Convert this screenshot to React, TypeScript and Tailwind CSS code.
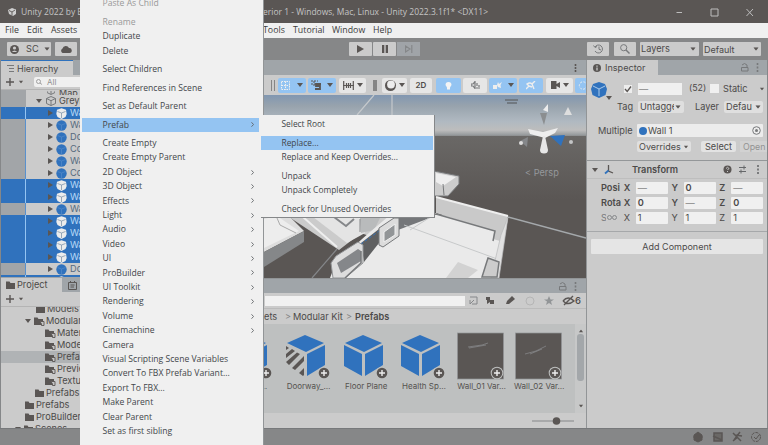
import React from "react";

const DARK = "#5a5654";
const BLUE = "#3072bd";

function Caret({ className = "" }: { className?: string }) {
  return (
    <svg className={`h-[4px] w-[6px] shrink-0 ${className}`} viewBox="0 0 6 4">
      <path d="M0 0H6L3 4Z" fill={DARK} />
    </svg>
  );
}

function Folder({ linked = false }: { linked?: boolean }) {
  return (
    <svg className="h-[9px] w-[12px] shrink-0" viewBox="0 0 12 9">
      <path d="M0 0.500H3.500L4.500 2H9V8H0Z" fill={DARK} />
      {linked && <path d="M6.500 4.500H10V8.500H7.500V6.500" fill="#c4c4c4" stroke={DARK} strokeWidth="0.900" />}
    </svg>
  );
}

function SmallCube({ light = false }: { light?: boolean }) {
  return (
    <svg className="h-[11px] w-[11px] shrink-0" viewBox="0 0 11 11">
      {light ? (
        <path d="M5.500 0.200L10 1.800L10.700 6L9.500 9L5.500 10.900L1.500 9L0.300 6L1 1.800Z" fill="#ececec" />
      ) : (
        <circle cx="5.500" cy="5.500" r="5.200" fill={BLUE} />
      )}
      <path d="M1.500 3.500L5.500 5L9.500 3.500M5.500 5V10" stroke={light ? "#8296ab" : "#5088c8"} strokeWidth="0.800" fill="none" />
    </svg>
  );
}

/* ---------- Title bar, menu bar and main toolbar ---------- */

function TitleBar() {
  return (
    <div className="flex h-[23px] shrink-0 items-center bg-[#5a5654] pt-px text-[#c4c4c4]">
      <svg className="ml-[8px] h-[8px] w-[8px]" viewBox="0 0 8 8">
        <path d="M0 2L4 0L8 1.500V6L5 8L1 6Z" fill="#cfcfcf" />
        <path d="M4 4L1 2.500M4 4L7 2M4 4V7.500" stroke={DARK} strokeWidth="0.900" />
      </svg>
      <div className="ml-[5px] w-[242px] whitespace-nowrap font-['Open_Sans',sans-serif] text-[8.500px]">Unity 2022 by Example - Int</div>
      <div className="whitespace-nowrap font-['Open_Sans',sans-serif] text-[8.500px]">erior 1 - Windows, Mac, Linux - Unity 2022.3.1f1* &lt;DX11&gt;</div>
      <svg className="ml-auto mr-[14px] h-[9px] w-[78px]" viewBox="0 0 78 9" fill="none" stroke="#bdbdbd">
        <path d="M0.500 4.500H6M35 1H42V8H35ZM70.500 1L77 8M77 1L70.500 8" />
      </svg>
    </div>
  );
}

function MenuBar() {
  return (
    <div className="flex h-[15px] shrink-0 items-center whitespace-nowrap bg-[#f0f0f0] pl-[5px] font-['Open_Sans',sans-serif] text-[8.800px] text-[#3c3c3c]">
      <span className="w-[22px]">File</span>
      <span className="w-[24px]">Edit</span>
      <span className="w-[212px]">Assets</span>
      <span className="w-[30px]">Tools</span>
      <span className="w-[39px]">Tutorial</span>
      <span className="w-[41px]">Window</span>
      <span>Help</span>
    </div>
  );
}

function Toolbar() {
  const btn = "flex h-[14px] items-center rounded-[1px] bg-[#cbcbcb]";
  return (
    <div className="flex h-[22px] shrink-0 items-center bg-[#868788] pl-[7px]">
      <div className={`${btn} w-[44px] pl-[3px]`}>
        <svg className="h-[9px] w-[9px]" viewBox="0 0 9 9">
          <circle cx="4.500" cy="4.500" r="4.500" fill={DARK} />
          <circle cx="4.500" cy="3" r="1.600" fill="#cbcbcb" />
          <path d="M1.800 7Q4.500 4 7.200 7Z" fill="#cbcbcb" />
        </svg>
        <span className="ml-[7px] text-[9.200px]">SC</span>
        <Caret className="ml-[5px] scale-90" />
      </div>
      <div className={`${btn} ml-[4px] w-[22px] justify-center`}>
        <svg className="h-[8px] w-[12px]" viewBox="0 0 12 8">
          <path d="M2.500 8A2.500 2.500 0 0 1 2.500 3.500A3.500 3.500 0 0 1 9 3A2.500 2.500 0 0 1 9.500 8Z" fill={DARK} />
        </svg>
      </div>
      <div className="ml-[272px] flex gap-px">
        <div className={`${btn} w-[23px] justify-center`}>
          <svg className="h-[8px] w-[7px]" viewBox="0 0 7 8"><path d="M0 0L7 4L0 8Z" fill={DARK} /></svg>
        </div>
        <div className={`${btn} w-[23px] justify-center`}>
          <svg className="h-[8px] w-[6px]" viewBox="0 0 6 8"><path d="M0 0H2.300V8H0ZM3.700 0H6V8H3.700Z" fill={DARK} /></svg>
        </div>
        <div className="flex h-[14px] w-[23px] items-center justify-center bg-[#a0a4a8]">
          <svg className="h-[8px] w-[8px]" viewBox="0 0 8 8" fill="none" stroke="#858789"><path d="M0.500 1L5 4L0.500 7ZM6.800 0V8" strokeWidth="1.200" /></svg>
        </div>
      </div>
      <div className={`${btn} ml-[167px] w-[22px] justify-center`}>
        <svg className="h-[10px] w-[11px]" viewBox="0 0 11 10" fill="none" stroke="#77797b">
          <path d="M2 3A4 4 0 1 1 2 7M0.500 1.500L2 3.500L4 2.500M6 2.500V5.300L8 6" />
        </svg>
      </div>
      <div className={`${btn} ml-[5px] w-[22px] justify-center`}>
        <svg className="h-[10px] w-[10px]" viewBox="0 0 10 10" fill="none" stroke="#77797b">
          <circle cx="3.700" cy="3.700" r="3.100" /><path d="M6 6L9.500 9.500" strokeWidth="1.400" />
        </svg>
      </div>
      <div className={`${btn} ml-[4px] w-[59px] justify-between pl-[1px] pr-[3px] text-[9.200px]`}>Layers<Caret className="scale-90" /></div>
      <div className={`${btn} ml-[4px] w-[58px] justify-between pl-[1px] pr-[2px] text-[9px]`}>Default<Caret className="scale-90" /></div>
    </div>
  );
}

/* ---------- Left column ---------- */

const hierarchyRows: [string, boolean][] = [
  ["Wall 1", true], ["Wall 1", false], ["Doorway", false], ["Corner", false],
  ["Wall 2", false], ["Corner", false], ["Wall 1", true], ["Wall 1", true],
  ["Wall 2", false], ["Wall 1", true], ["Wall 1", true], ["Wall 1", true],
  ["Wall 1", true], ["Doorway", false], ["Wall 1", true],
];

function Hierarchy() {
  return (
    <div className="flex h-[217px] shrink-0 flex-col overflow-hidden bg-[#cbcbcb]">
      <div className="flex h-[15px] shrink-0 bg-[#a0a5a9]">
        <div className="flex w-[72px] items-center border-t border-[#3072bd] bg-[#cbcbcb] pl-[6px] text-[9px]">
          <svg className="mr-[3px] h-[7px] w-[7px]" viewBox="0 0 7 7" stroke="#77797b"><path d="M0 0.500H7M2 3.500H7M2 6.500H7" /></svg>
          Hierarchy
        </div>
      </div>
      <div className="flex h-[15px] shrink-0 items-center border-b border-[#b4b4b4]">
        <svg className="ml-[5px] h-[8px] w-[8px]" viewBox="0 0 8 8" stroke={DARK} strokeWidth="1.400"><path d="M4 0V8M0 4H8" /></svg>
        <Caret className="ml-[4px] scale-75" />
        <div className="ml-[10px] flex h-[10px] w-[180px] items-center rounded-[2px] bg-[#f0f0f0] pl-[2px] text-[8px] text-[#909090]">
          <svg className="mr-[4px] h-[6px] w-[7px]" viewBox="0 0 7 6" fill="none" stroke="#a0a0a0"><circle cx="2.500" cy="2.500" r="2" /><path d="M4 4L6 5.500" /></svg>
          All
        </div>
      </div>
      <div className="flex h-[5px] shrink-0 items-end overflow-hidden">
        <span className="h-full w-[25px] bg-[#a2a5a8]" />
        <svg className="ml-[21px] h-[4px] w-[8px]" viewBox="0 0 8 4" stroke="#77797b" fill="none"><path d="M0 0V1.500L4 3.500L8 1.500V0M4 0V3" /></svg>
        <span className="ml-[4px] text-[9px] leading-[5px]">Map</span>
      </div>
      <div className="flex h-[12px] shrink-0 items-center text-[9.200px]">
        <span className="h-full w-[25px] bg-[#a2a5a8]" />
        <Caret className="ml-[10px]" />
        <svg className="ml-[4px] h-[10px] w-[10px]" viewBox="0 0 10 10" fill="none" stroke="#77797b">
          <path d="M5 0.500L9.500 2.500V7.500L5 9.500L0.500 7.500V2.500ZM0.500 2.500L5 4.700L9.500 2.500M5 4.700V9.500" />
        </svg>
        <span className="ml-[3px] whitespace-nowrap">Greybox</span>
      </div>
      {hierarchyRows.map(([name, selected], i) => (
        <div key={i} className={`flex h-[12px] shrink-0 items-center whitespace-nowrap text-[9.200px] ${selected ? "bg-[#3072bd] text-[#b9dbf8]" : "bg-[#cbcbcb] text-[#56697e]"}`}>
          <span className={`h-full w-[25px] border-r ${selected ? "border-[#94c4f2]" : "border-[#5a91cd] bg-[#a2a5a8]"}`} />
          <svg className="ml-[22px] h-[6px] w-[5px]" viewBox="0 0 5 6"><path d="M0 0L5 3L0 6Z" fill={DARK} /></svg>
          <span className="ml-[3px] flex"><SmallCube light={selected} /></span>
          <span className="ml-[3px]">{name}</span>
        </div>
      ))}
    </div>
  );
}

function TreeRow({ name, indent, linked, open, selected }: { name: string; indent: string; linked?: boolean; open?: boolean; selected?: boolean }) {
  return (
    <div className={`flex h-[12px] shrink-0 items-center whitespace-nowrap text-[9.200px] ${indent} ${selected ? "bg-[#b0b3b5]" : ""}`}>
      {open && <Caret className="mr-[3px]" />}
      <Folder linked={linked} />
      <span className={linked ? "" : "-ml-px"}>{name}</span>
    </div>
  );
}

function ProjectTree() {
  return (
    <div className="flex grow flex-col overflow-hidden bg-[#cbcbcb]">
      <div className="flex h-[15px] shrink-0 bg-[#a0a5a9] pt-px">
        <div className="flex w-[61px] items-center bg-[#cbcbcb] pl-[5px] text-[9.200px]"><Folder /><span className="-ml-px">Project</span></div>
        <svg className="ml-[6px] mt-[3px] h-[9px] w-[9px]" viewBox="0 0 9 9" fill="none" stroke={DARK}><path d="M0.500 1.500H8.500V8.500H0.500ZM2.500 0V2M6.500 0V2M2.500 4H6.500M2.500 6H6" /></svg>
      </div>
      <div className="flex h-[15px] shrink-0 items-center border-b border-[#b4b4b4]">
        <svg className="ml-[5px] h-[8px] w-[8px]" viewBox="0 0 8 8" stroke={DARK} strokeWidth="1.400"><path d="M4 0V8M0 4H8" /></svg>
        <Caret className="ml-[4px] scale-75" />
      </div>
      <div className="flex h-[121px] shrink-0 flex-col overflow-hidden">
        <div className="flex h-[8px] shrink-0 items-end overflow-hidden"><TreeRow name="Models" indent="pl-[35px]" /></div>
        <TreeRow name="Modular Kit" indent="pl-[24px]" linked open />
        <TreeRow name="Materials" indent="pl-[44px]" linked />
        <TreeRow name="Models" indent="pl-[44px]" linked />
        <TreeRow name="Prefabs" indent="pl-[44px]" linked selected />
        <TreeRow name="Previews" indent="pl-[44px]" linked />
        <TreeRow name="Textures" indent="pl-[44px]" linked />
        <TreeRow name="Prefabs" indent="pl-[34px]" />
        <TreeRow name="Prefabs" indent="pl-[24px]" />
        <TreeRow name="ProBuilder Data" indent="pl-[24px]" />
        <TreeRow name="Scenes" indent="pl-[14px]" open />
      </div>
    </div>
  );
}

/* ---------- Scene view ---------- */

function SceneToolbar() {
  const on = "bg-[#94c4f2]";
  const off = "bg-[#e6e6e6]";
  const cell = "flex h-[15px] shrink-0 items-center justify-center gap-[3px] rounded-[2px]";
  return (
    <div className="flex h-[20px] shrink-0 items-center overflow-hidden bg-[#cbcbcb] pl-[7px]">
      <span className="h-[11px] w-[4px] shrink-0 border-x border-[#858585]" />
      <div className={`${cell} ${on} ml-[3px] w-[28px] gap-[7px]`}>
        <svg className="h-[9px] w-[9px]" viewBox="0 0 9 9" fill="none" stroke="#f0f0f0" strokeDasharray="1.500 1"><path d="M0.500 0.500H8.500V8.500H0.500ZM0.500 4.500H8.500M4.500 0.500V8.500" /></svg><Caret />
      </div>
      <div className={`${cell} ${on} ml-[2px] w-[28px] gap-[5px]`}>
        <svg className="h-[10px] w-[11px]" viewBox="0 0 11 10" fill="none" stroke={DARK}><path d="M0 1H7M0 4H6M3 1V6" strokeDasharray="2 1" /><path d="M10 4H5V6H9V9H4" strokeWidth="1.800" /></svg><Caret />
      </div>
      <div className={`${cell} ${off} ml-[3px] w-[27px]`}>
        <svg className="h-[9px] w-[11px]" viewBox="0 0 11 9" fill="none" stroke={DARK}><path d="M0.700 0V9M10.300 0V9M3.500 2V7M5.500 2V7M7.500 2V7M0 4.500H11" strokeWidth="1.200" /></svg><Caret />
      </div>
      <span className="ml-[7px] h-[11px] w-[4px] shrink-0 bg-[#858585]" />
      <div className={`${cell} ${off} ml-[5px] w-[25px]`}>
        <svg className="h-[11px] w-[11px]" viewBox="0 0 11 11"><circle cx="5.500" cy="5.500" r="5.500" fill={DARK} /><circle cx="6" cy="4.500" r="3.900" fill="#ededed" /></svg><Caret />
      </div>
      <div className={`${cell} ${off} ml-[3px] w-[22px] text-[8px] font-semibold`}>2D</div>
      <div className={`${cell} ${on} ml-[4px] w-[25px]`}>
        <svg className="h-[10px] w-[7px]" viewBox="0 0 7 10"><path d="M2 7.500L0.500 5A3 3 0 1 1 6.500 5L5 7.500V9.500H2Z" fill="#f4f4f4" /></svg>
      </div>
      <div className={`${cell} ${off} ml-[2px] w-[24px]`}>
        <svg className="h-[8px] w-[9px]" viewBox="0 0 9 8" fill="none" stroke="#77797b"><path d="M0 3H2L4 0.500V7.500L2 5H0ZM5 7L9 7M6 2V5M8 4V6" strokeWidth="1.200" /></svg>
      </div>
      <div className={`${cell} ${on} ml-[2px] w-[28px] gap-[6px]`}>
        <svg className="h-[9px] w-[9px]" viewBox="0 0 9 9" fill="#eeeeee"><path d="M0 4H4V8H0ZM4 4L5 1L6 3L9 1L7.500 4L8 7L5 6Z" /></svg><Caret />
      </div>
      <div className={`${cell} ${on} ml-[2px] w-[24px]`}>
        <svg className="h-[9px] w-[10px]" viewBox="0 0 10 9" fill="none" stroke="#eeeeee"><path d="M0 8L3 5L1 3Q4 1 6 3L9 0M6 3L8 8M3 5L6 6" strokeWidth="1.400" /></svg>
      </div>
      <div className={`${cell} ${off} ml-[3px] w-[27px]`}>
        <svg className="h-[8px] w-[9px]" viewBox="0 0 9 8"><path d="M0 0H5.500V3L9 1V7L5.500 5V8H0Z" fill={DARK} /></svg><Caret />
      </div>
      <div className={`${cell} ${on} ml-[2px] w-[14px]`}>
        <svg className="h-[9px] w-[9px]" viewBox="0 0 9 9" fill="none" stroke="#eeeeee"><circle cx="5" cy="4.500" r="3.700" strokeDasharray="2 1.500" /></svg>
      </div>
    </div>
  );
}

function Scene() {
  return (
    <svg className="h-[183px] w-[322px] shrink-0" viewBox="264 95 322 183">
      <defs>
        <linearGradient id="sky" x1="0" y1="95" x2="0" y2="139" gradientUnits="userSpaceOnUse">
          <stop offset="0" stopColor="#8197b1" />
          <stop offset="0.250" stopColor="#98a3ad" />
          <stop offset="0.600" stopColor="#b0b9c1" />
          <stop offset="0.800" stopColor="#bdbdbd" />
          <stop offset="0.900" stopColor="#999d9f" />
          <stop offset="1" stopColor="#6b6967" />
        </linearGradient>
        <linearGradient id="ground" x1="0" y1="136" x2="0" y2="278" gradientUnits="userSpaceOnUse">
          <stop offset="0" stopColor="#6a6866" />
          <stop offset="0.450" stopColor="#5a5654" />
        </linearGradient>
      </defs>
      <rect x="264" y="95" width="322" height="44" fill="url(#sky)" />
      <rect x="264" y="136" width="322" height="142" fill="url(#ground)" />
      <path d="M374 95L357 115M392 95V115" stroke="#c5c9cc" strokeWidth="1.200" />
      <path d="M508 217L586 238" stroke="#a4a8ab" strokeWidth="1.400" />
      <path d="M337 249L312 278" stroke="#85878a" strokeWidth="1.200" />

      {/* far room behind the submenu edge */}
      <path d="M434 171L459 176V184L448 196L434 196Z" fill="#cccccc" stroke="#77797b" />
      <path d="M436 173L456 177L443 186L436 182Z" fill="#eeeeee" />
      <path d="M443 184L444 195" stroke="#77797b" />

      {/* left block */}
      <path d="M264 215H288L304 231L264 252Z" fill="#dddddd" />
      <path d="M264 219L277 216L299 231L264 248Z" fill="#ededed" />
      <path d="M277 218L280 225L296 233" fill="none" stroke="#aaaaaa" />
      <path d="M304 231V242L264 267V252Z" fill="#858789" />
      <path d="M286 215H390L380 240L361 233L339 250Z" fill="#cbcbcb" />
      <path d="M303 217L337 247" stroke="#efefef" strokeWidth="2" />
      <path d="M313 217H360L365 233L347 243Z" fill="#e4e4e4" />
      <path d="M334 217L346 226L354 219" fill="none" stroke="#85878a" strokeWidth="2" />
      <path d="M360 218H380L374 230L361 233Z" fill="#b9bbbc" />
      <path d="M360 219V232" stroke="#858789" />

      {/* main floor */}
      <path d="M390 215H440L508 218L498 278H330L336 262L370 232Z" fill="#eaeaea" />
      <path d="M397 216H435L398 230Z" fill="#75777a" />
      <path d="M404 225L500 260M440 211L410 230" stroke="#c7c9ca" />
      <path d="M436 197L508 216L500 241L493 239L494 231L436 213Z" fill="#c9c9c9" />
      <path d="M436 197L508 216" stroke="#eeeeee" strokeWidth="2" />
      <path d="M436 214L495 231L493 241" fill="none" stroke="#77797b" strokeWidth="1.500" />
      <path d="M508 217L499 278H491L501 235Z" fill="#e1e1e1" stroke="#b7b9ba" strokeWidth="0.700" />
      <path d="M488 258L499 262L497 277H482Z" fill="#cccccc" stroke="#77797b" strokeWidth="1.500" />
      <path d="M458 262L478 270L468 278H446Z" fill="#d2d2d2" />

      {/* wall opening and window frames */}
      <path d="M361 243L379 229V243L364 262Z" fill="#5f6061" />
      <path d="M361 244L379 231" stroke={BLUE} strokeDasharray="3 2" />
      <path d="M379 228L394 218L399 218V236L383 247L379 245Z" fill="#dcdcdc" stroke="#77797b" />
      <path d="M384 232L395 224V235L384 242Z" fill="#929597" stroke="#f0f0f0" />
      <path d="M331 263L336 256L358 242L363 245V263L345 278H333Z" fill="#dddddd" stroke="#929496" />
      <path d="M337 263L358 249L361 251V261L341 273Z" fill="#85878a" />
      <path d="M361 251V263L345 278" fill="none" stroke="#77797b" strokeWidth="1.500" />

      {/* orientation gizmo */}
      <path d="M505 100H518M507 103H517" stroke="#717981" strokeWidth="2" />
      <path d="M543 110L548 104V112Z" fill="#ededed" />
      <path d="M540 113H547L544 125Z" fill="#8b8e90" />
      <path d="M528 129L543 132L558 128L555 133L545 138L530 134Z" fill="#eeeeee" />
      <path d="M540 150Q540 153.500 544 153.500Q548 153.500 548 150L545 136H543Z" fill="#e7e7e7" />
      <path d="M550 136L565 135L561 146Z" fill={BLUE} />
      <path d="M568 107L564 115H572Z" fill="#dedede" />
      <path d="M520 141L528 137L527 147Z" fill="#85878a" />
      <circle cx="521" cy="143" r="2" fill="#dddddd" /><circle cx="571" cy="142" r="2" fill="#c3c5c6" />
      <text x="525" y="175.500" fontFamily="Inter, sans-serif" fontSize="9.200" fill="#96999c">&lt; Persp</text>
    </svg>
  );
}

function LockAndMenu({ className = "" }: { className?: string }) {
  return (
    <svg className={`h-[9px] w-[19px] ${className}`} viewBox="0 0 19 9" fill="none" stroke="#77797b">
      <path d="M1 2Q3.500 -1 6 2V4M0.500 4.500H7V8H0.500Z" />
      <path d="M16.500 0V2M16.500 3.500V5.500M16.500 7V9" strokeWidth="1.600" />
    </svg>
  );
}

/* ---------- Project browser ---------- */

type AssetKind = "cube" | "striped" | "thumb1" | "thumb2";

function PlusBadge() {
  return (
    <g>
      <circle cx="42" cy="41" r="6.300" fill="#bfc1c1" />
      <circle cx="42" cy="41" r="5.300" fill={DARK} />
      <path d="M42 38V44M39 41H45" stroke="#eeeeee" strokeWidth="1.400" />
    </g>
  );
}

function Asset({ name, kind }: { name: string; kind: AssetKind }) {
  const cube = kind === "cube" || kind === "striped";
  return (
    <div className="flex w-[57.700px] shrink-0 flex-col items-center">
      <svg className="mr-[1px] h-[50px] w-[52px]" viewBox="0 0 52 50">
        {cube ? (
          <g>
            <path d="M23 3L42 11L24 20L5 11Z" fill={BLUE} />
            {kind === "striped" ? (
              <path d="M4 14V18L7 16L4 14ZM4 22V26L13 19L10 17ZM4 30L7 33L18 22L15 20.500ZM10 36L13 38L22 29V24ZM17 41L21 44L22 43V36Z" fill={DARK} />
            ) : (
              <path d="M4 13L22 22V44L4 34Z" fill={BLUE} />
            )}
            <path d="M25 22L43 13V33L25 44Z" fill={BLUE} />
          </g>
        ) : (
          <g>
            <rect x="2.500" y="1" width="46" height="46" fill={DARK} stroke="#929597" strokeWidth="0.700" />
            <path d={kind === "thumb1" ? "M13 15L27 13L33 11M14 16L31 13" : "M12 22L23 19L33 14M17 22L29 17"} stroke="#8b8d8f" fill="none" strokeWidth="0.700" />
          </g>
        )}
        <PlusBadge />
      </svg>
      <span className="-mt-px whitespace-nowrap text-[8px] leading-[11px] text-[#55524f]">{name}</span>
    </div>
  );
}

function ProjectBrowser() {
  return (
    <div className="flex h-[150px] shrink-0 flex-col bg-[#cbcbcb]">
      <div className="flex h-[15px] shrink-0 items-center justify-end border-t border-[#929597] bg-[#a0a5a9]"><LockAndMenu className="mr-[8px]" /></div>
      <div className="flex h-[15px] shrink-0 items-center">
        <div className="ml-px h-[10px] w-[200px] bg-[#f1f1f1]" />
        <svg className="h-[12px] w-[110px]" viewBox="465 295 110 12" fill="none" stroke={DARK}>
          <path d="M470 297H477V304H472M470 300V304L474 300" stroke="#85878a" />
          <path d="M486 297H490V300L494 300V304H490V302L487 304V300H486Z" fill={DARK} stroke="none" />
          <path d="M507 301L512 296L515 299L509 304H506Z" fill={DARK} stroke="none" />
          <circle cx="530" cy="301" r="4" stroke="#b5b5b5" />
          <path d="M549 296L550.500 299.500H554L551 301.500L552 305L549 303L546 305L547 301.500L544 299.500H547.500Z" fill="#929597" stroke="none" />
          <path d="M563 301Q568 295 574 301Q568 306 563 301M564 305L573 296" strokeWidth="1.400" />
        </svg>
        <span className="text-[9.500px] font-medium">6</span>
      </div>
      <div className="flex h-[16px] shrink-0 items-center whitespace-nowrap border-t border-[#bbbbbb] text-[9.200px]">
        <span className="ml-[-16px] w-[37px]">Assets</span><span className="w-[8px] text-[#858585]">&gt;</span>
        <span className="w-[53px]">Modular Kit</span><span className="w-[9px] text-[#858585]">&gt;</span>
        <span className="font-semibold">Prefabs</span>
      </div>
      <div className="flex h-[89px] shrink-0 bg-[#bec0c0]">
        <div className="flex w-[311px] overflow-hidden pt-[8px]">
          <div className="ml-[-42px] flex">
            <Asset name="Ceiling…" kind="cube" />
            <Asset name="Doorway_…" kind="striped" />
            <Asset name="Floor Plane" kind="cube" />
            <Asset name="Health Sp…" kind="cube" />
            <Asset name="Wall_01 Var…" kind="thumb1" />
            <Asset name="Wall_02 Var…" kind="thumb2" />
          </div>
        </div>
        <div className="flex grow flex-col items-center justify-between bg-[#c7c8c8] py-[5px]">
          <Caret className="rotate-180 scale-75" />
          <div className="mb-[23px] h-[47px] w-[7px] rounded-[3px] bg-[#a3a7aa]" />
          <Caret className="scale-75" />
        </div>
      </div>
      <div className="flex h-[15px] shrink-0 items-center justify-end">
        <svg className="mr-[12px] h-[8px] w-[42px]" viewBox="0 0 42 8"><path d="M0 4H42" stroke="#858789" /><circle cx="24.500" cy="4" r="3.800" fill={DARK} /></svg>
      </div>
    </div>
  );
}

/* ---------- Inspector ---------- */

function Axis({ axis, value, strong }: { axis: string; value: string; strong?: boolean }) {
  return (
    <div className="flex w-[48px] items-center">
      <span className={`w-[12px] text-[9.200px] ${strong ? "font-semibold" : ""}`}>{axis}</span>
      <span className={`h-[12px] w-[32px] rounded-[1px] bg-[#f0f0f0] pl-[2px] text-[9.200px] leading-[12px] ${value === "—" ? "text-[#858585]" : ""} ${strong && value !== "—" ? "font-semibold" : ""}`}>{value}</span>
    </div>
  );
}

function Inspector() {
  return (
    <div className="flex w-[181px] shrink-0 flex-col overflow-hidden border-r border-[#858789] bg-[#cbcbcb] text-[9.200px]">
      <div className="flex h-[15px] shrink-0 items-center justify-between bg-[#a0a5a9]">
        <div className="flex h-full w-[71px] items-center bg-[#cbcbcb] pl-[6px] pt-px text-[9.100px]">
          <svg className="mr-[4px] h-[8px] w-[8px]" viewBox="0 0 8 8"><circle cx="4" cy="4" r="4" fill={DARK} /><path d="M4 1.500V2.700M4 3.500V6.500" stroke="#cbcbcb" strokeWidth="1.300" /></svg>
          Inspector
        </div>
        <LockAndMenu className="mr-[7px]" />
      </div>
      <div className="flex h-[86px] shrink-0 border-b border-[#949799]">
        <div className="w-[25px] shrink-0 pl-[4px] pt-[7px]">
          <svg className="h-[16px] w-[16px]" viewBox="0 0 16 16"><path d="M8 0L14 2L16 7L14.500 13L8 16L1.500 13L0 7L2 2Z" fill={BLUE} /><path d="M2 4L8 7L14 4M8 7V14" stroke="#b9d5ee" strokeWidth="0.900" fill="none" /></svg>
          <Caret className="ml-auto mt-[-2px]" />
        </div>
        <div className="flex grow flex-col">
          <div className="mt-[7px] flex h-[13px] items-center">
            <svg className="ml-[12px] h-[8px] w-[8px]" viewBox="0 0 8 8"><rect width="8" height="8" fill="#ededed" /><path d="M1 4L3.200 6.500L7 1.500" fill="none" stroke={DARK} strokeWidth="1.300" /></svg>
            <div className="ml-[6px] h-[12px] w-[44px] bg-[#f0f0f0] pl-[1px] leading-[12px] text-[#858585]">—</div>
            <span className="ml-[7px] w-[20px] text-[8.800px]">(52)</span>
            <span className="ml-[1px] h-[9px] w-[9px] bg-[#f0f0f0]" />
            <span className="ml-[4px]">Static</span><Caret className="ml-auto mr-[5px] scale-75" />
          </div>
          <div className="mt-[6px] flex h-[12px] items-center">
            <span className="ml-[5px] w-[21px]">Tag</span>
            <div className="flex h-[12px] w-[46px] items-center justify-between rounded-[2px] bg-[#dfdfdf] pl-[2px] pr-[3px]"><span className="w-[34px] overflow-hidden leading-[12px]">Untagged</span><Caret className="scale-90" /></div>
            <span className="ml-[11px] w-[29px]">Layer</span>
            <div className="flex h-[12px] w-[39px] items-center justify-between rounded-[2px] bg-[#dfdfdf] pl-[2px] pr-[2px]"><span className="w-[26px] overflow-hidden leading-[12px]">Default</span><Caret className="scale-90" /></div>
          </div>
          <div className="mt-[11px] flex h-[13px] items-center">
            <span className="ml-[-14px] w-[39px]">Multiple</span>
            <div className="flex h-[13px] w-[126px] items-center rounded-[1px] bg-[#ececec] pl-[2px]">
              <svg className="mr-[1px] h-[8px] w-[8px]" viewBox="0 0 8 8"><circle cx="4" cy="4" r="4" fill={BLUE} /></svg>Wall 1
              <svg className="ml-auto mr-[2px] h-[9px] w-[9px]" viewBox="0 0 9 9"><circle cx="4.500" cy="4.500" r="3.800" fill="none" stroke="#77797b" /><circle cx="4.500" cy="4.500" r="1.500" fill="#77797b" /></svg>
            </div>
          </div>
          <div className="mt-[4px] flex h-[11px] items-center whitespace-nowrap">
            <div className="ml-[25px] flex h-[11px] w-[54px] items-center justify-between rounded-[2px] bg-[#dfdfdf] px-[2px] text-[9px]">Overrides<Caret className="scale-75" /></div>
            <div className="ml-[10px] h-[11px] w-[35px] rounded-[2px] bg-[#e3e3e3] text-center leading-[11px]">Select</div>
            <div className="ml-[4px] h-[11px] w-[30px] bg-[#d2d2d2] pl-[3px] text-[8.800px] leading-[11px] text-[#929292]">Open</div>
          </div>
        </div>
      </div>
      <div className="flex h-[18px] shrink-0 items-center border-b border-[#bebebe]">
        <Caret className="ml-[5px]" />
        <svg className="ml-[6px] h-[10px] w-[10px]" viewBox="0 0 10 10" fill="none"><path d="M4.500 0V6L9 8" stroke={DARK} strokeWidth="1.300" /><path d="M4.500 5.500L1 8.500" stroke={BLUE} strokeWidth="1.800" /></svg>
        <span className="ml-[18px] text-[9.200px] font-semibold">Transform</span>
        <svg className="ml-auto mr-[6px] h-[9px] w-[38px]" viewBox="0 0 38 9" fill="none" stroke="#66686a">
          <circle cx="4.500" cy="4.500" r="4" fill={DARK} stroke="none" /><path d="M3 3.500Q4.500 1 6 3.500L4.500 5M4.500 6V7" stroke="#cbcbcb" />
          <path d="M16 2.500H23M21 0.500V4.500M16 6.500H23M18 4.500V8.500" />
          <path d="M35 0V2M35 3.500V5.500M35 7V9" strokeWidth="1.600" />
        </svg>
      </div>
      <div className="flex h-[53px] shrink-0 flex-col gap-[3px] border-b border-[#a6a8aa] pt-[3px] pl-[14px]">
        <div className="flex h-[12px]"><span className="w-[23px] font-semibold leading-[12px]">Posi</span><Axis axis="X" value="—" strong /><Axis axis="Y" value="0" strong /><Axis axis="Z" value="—" strong /></div>
        <div className="flex h-[12px]"><span className="w-[23px] font-semibold leading-[12px]">Rota</span><Axis axis="X" value="0" strong /><Axis axis="Y" value="—" strong /><Axis axis="Z" value="0" strong /></div>
        <div className="flex h-[12px]">
          <span className="flex w-[23px] text-[#77797b]">
            <span className="w-[5px] overflow-hidden leading-[12px]">S</span>
            <svg className="ml-[1px] mt-[2px] h-[7px] w-[10px]" viewBox="0 0 10 7" fill="none" stroke="#85878a"><circle cx="2.500" cy="3.500" r="2" /><circle cx="7.500" cy="3.500" r="2" /></svg>
          </span>
          <Axis axis="X" value="1" /><Axis axis="Y" value="1" /><Axis axis="Z" value="1" />
        </div>
      </div>
      <div className="ml-[4px] mt-[7px] h-[15px] w-[172px] shrink-0 rounded-[1px] bg-[#e5e5e5] text-center text-[9px] leading-[16px]">Add Component</div>
    </div>
  );
}

/* ---------- Context menus ---------- */

const menuGroups: string[][] = [
  ["Paste As Child"],
  ["Rename", "Duplicate", "Delete"],
  ["Select Children"],
  ["Find References in Scene"],
  ["Set as Default Parent"],
  ["Prefab"],
  ["Create Empty", "Create Empty Parent", "2D Object", "3D Object", "Effects", "Light", "Audio", "Video", "UI", "ProBuilder", "UI Toolkit", "Rendering", "Volume", "Cinemachine", "Camera", "Visual Scripting Scene Variables", "Convert To FBX Prefab Variant...", "Export To FBX...", "Make Parent", "Clear Parent", "Set as first sibling"],
];
const withSubmenu = ["Prefab", "2D Object", "3D Object", "Effects", "Light", "Audio", "Video", "UI", "ProBuilder", "UI Toolkit", "Rendering", "Volume", "Cinemachine"];
const disabled = ["Paste As Child", "Rename"];

function MenuList({ groups, active, indent }: { groups: string[][]; active: string; indent: string }) {
  return (
    <>
      {groups.map((group, i) => (
        <div key={i} className="mb-[4.100px] flex flex-col">
          {group.map((item) => (
            <div key={item} className={`flex h-[14.400px] items-center justify-between whitespace-nowrap ${indent} pr-[5px] ${item === active ? "bg-[#94c4f2]" : ""} ${disabled.includes(item) ? "text-[#999999]" : "text-[#42464a]"}`}>
              {item}
              {withSubmenu.includes(item) && (
                <svg className="h-[5px] w-[3px]" viewBox="0 0 3 5" fill="none" stroke="#606468"><path d="M0.500 0.300L2.500 2.500L0.500 4.700" strokeWidth="0.900" /></svg>
              )}
            </div>
          ))}
        </div>
      ))}
    </>
  );
}

function ContextMenus() {
  return (
    <>
      <div className="absolute left-[80px] top-[-4px] h-[460px] w-[184px] border-r border-[#929597] bg-[#f0f0f0] pl-[2px] pr-[4px] pt-[0.500px] font-['Open_Sans',sans-serif] text-[8.600px]">
        <MenuList groups={menuGroups} active="Prefab" indent="pl-[20.500px]" />
      </div>
      <div className="absolute left-[261px] top-[115px] h-[103px] w-[174px] border-b border-r border-[#858789] bg-[#f0f0f0] pr-[1px] pt-[2.500px] font-['Open_Sans',sans-serif] text-[8.400px]">
        <MenuList groups={[["Select Root"], ["Replace...", "Replace and Keep Overrides..."], ["Unpack", "Unpack Completely"], ["Check for Unused Overrides"]]} active="Replace..." indent="pl-[20.500px]" />
      </div>
    </>
  );
}

function StatusBar() {
  return (
    <div className="flex h-[17px] shrink-0 items-center justify-end border-t border-[#77797b] bg-[#868788] pr-[5px]">
      <svg className="h-[12px] w-[72px]" viewBox="0 0 72 12" fill="none" stroke={DARK}>
        <path d="M3 4L7 1L11 4V9L7 11L3 9ZM7 2V10M2 6H12" fill={DARK} />
        <path d="M23 2H31V10H23ZM22 5L31 9" fill="#6a6866" strokeWidth="1.500" />
        <path d="M42 2L50 10M49 1L43 9M44 4L51 5M42 10L47 6" strokeWidth="1.500" />
        <circle cx="65" cy="6" r="4.500" strokeDasharray="3 1" /><path d="M63 6L65 8L68 4" />
      </svg>
    </div>
  );
}

export default function App() {
  return (
    <div className="relative flex h-[445px] w-[768px] flex-col overflow-hidden bg-[#868788] font-['Inter',sans-serif] leading-none text-[#4c4a49]">
      <TitleBar />
      <MenuBar />
      <Toolbar />
      <div className="flex h-[368px] shrink-0">
        <div className="flex w-[264px] shrink-0 flex-col border-l border-[#858789]">
          <Hierarchy />
          <ProjectTree />
        </div>
        <div className="flex w-[322px] shrink-0 flex-col">
          <div className="flex h-[15px] shrink-0 items-center justify-end bg-[#a0a5a9]">
            <svg className="mr-[9px] h-[8px] w-[3px]" viewBox="0 0 3 8"><path d="M1.500 0V2M1.500 3V5M1.500 6V8" stroke={DARK} strokeWidth="1.600" /></svg>
          </div>
          <SceneToolbar />
          <Scene />
          <ProjectBrowser />
        </div>
        <div className="w-px bg-[#929597]" />
        <Inspector />
      </div>
      <StatusBar />
      <ContextMenus />
    </div>
  );
}
